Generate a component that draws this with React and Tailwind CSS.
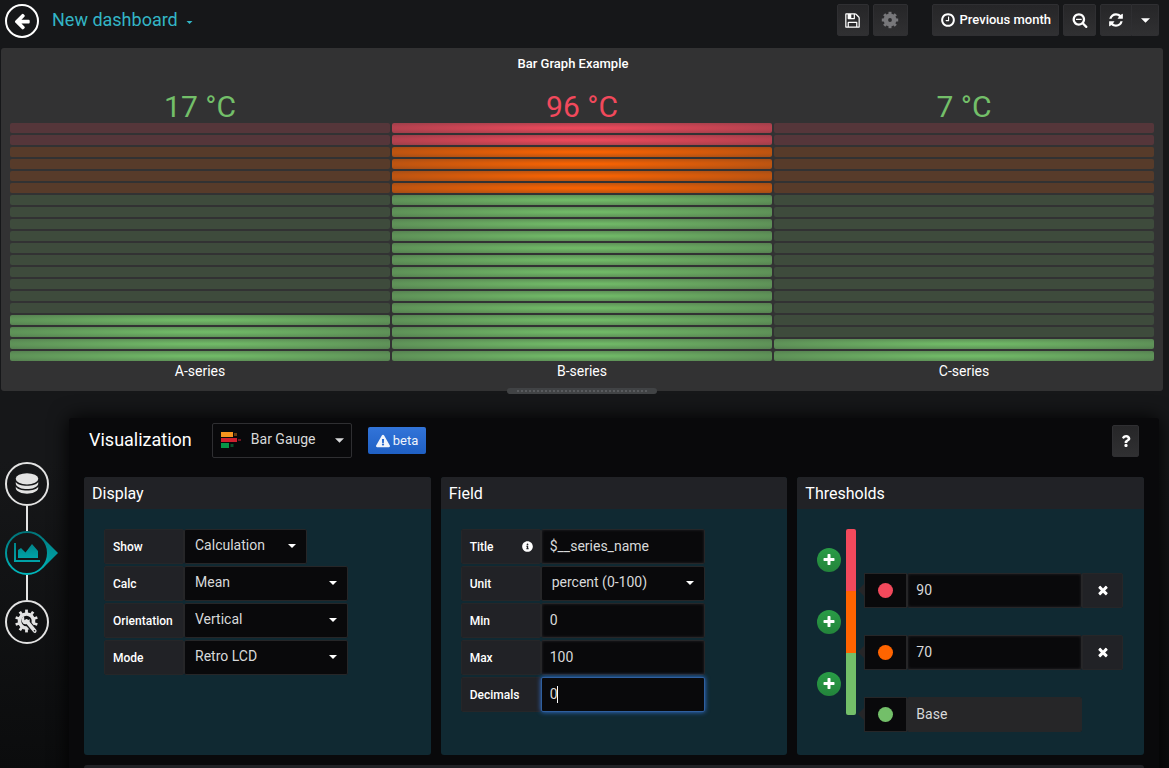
import React, { useState } from "react";
import { FaExclamationTriangle, FaInfoCircle, FaQuestion } from "react-icons/fa";
import clsx from "clsx";

const ICONS = {
  back: "M1664 896v128q0 53-32.5 90.5t-84.5 37.5h-704l293 294q38 36 38 90t-38 90l-75 76q-37 37-90 37-52 0-91-37l-651-652q-37-37-37-90 0-52 37-91l651-650q38-38 91-38 52 0 90 38l75 74q38 38 38 91t-38 91l-293 293h704q52 0 84.5 37.5t32.5 90.5z",
  save: "M512 1536h768v-384h-768v384zm896 0h128v-896q0-14-10-38.5t-20-34.5l-281-281q-10-10-34-20t-39-10v416q0 40-28 68t-68 28h-576q-40 0-68-28t-28-68v-416h-128v1280h128v-416q0-40 28-68t68-28h832q40 0 68 28t28 68v416zm-384-928v-320q0-13-9.5-22.5t-22.5-9.5h-192q-13 0-22.5 9.5t-9.5 22.5v320q0 13 9.5 22.5t22.5 9.5h192q13 0 22.5-9.5t9.5-22.5zm640 32v928q0 40-28 68t-68 28h-1344q-40 0-68-28t-28-68v-1344q0-40 28-68t68-28h928q40 0 88 20t76 48l280 280q28 28 48 76t20 88z",
  clock: "M1024 544v448q0 14-9 23t-23 9h-320q-14 0-23-9t-9-23v-64q0-14 9-23t23-9h224v-352q0-14 9-23t23-9h64q14 0 23 9t9 23zm416 352q0-148-73-273t-198-198-273-73-273 73-198 198-73 273 73 273 198 198 273 73 273-73 198-198 73-273zm224 0q0 209-103 385.5t-279.5 279.5-385.5 103-385.5-103-279.5-279.5-103-385.5 103-385.5 279.5-279.5 385.5-103 385.5 103 279.5 279.5 103 385.5z",
  zoomOut: "M1088 800v64q0 13-9.5 22.5t-22.5 9.5h-576q-13 0-22.5-9.5t-9.5-22.5v-64q0-13 9.5-22.5t22.5-9.5h576q13 0 22.5 9.5t9.5 22.5zm128 32q0-185-131.5-316.5t-316.5-131.5-316.5 131.5-131.5 316.5 131.5 316.5 316.5 131.5 316.5-131.5 131.5-316.5zm512 832q0 53-37.5 90.5t-90.5 37.5q-54 0-90-38l-343-342q-179 124-399 124-143 0-273.5-55.5t-225-150-150-225-55.5-273.5 55.5-273.5 150-225 225-150 273.5-55.5 273.5 55.5 225 150 150 225 55.5 273.5q0 220-124 399l343 343q37 37 37 90z",
  refresh: "M1639 1056q0 5-1 7-64 268-268 434.5t-478 166.5q-146 0-282.5-55t-243.5-157l-129 129q-19 19-45 19t-45-19-19-45v-448q0-26 19-45t45-19h448q26 0 45 19t19 45-19 45l-137 137q71 66 161 102t187 36q134 0 250-65t186-179q11-17 53-117 8-23 30-23h192q13 0 22.5 9.5t9.5 22.5zm25-800v448q0 26-19 45t-45 19h-448q-26 0-45-19t-19-45 19-45l138-138q-148-137-349-137-134 0-250 65t-186 179q-11 17-53 117-8 23-30 23h-199q-13 0-22.5-9.5t-9.5-22.5v-7q65-268 270-434.5t480-166.5q146 0 284 55.5t245 156.5l130-129q19-19 45-19t45 19 19 45z",
  plus: "M1600 736v192q0 40-28 68t-68 28h-416v416q0 40-28 68t-68 28h-192q-40 0-68-28t-28-68v-416h-416q-40 0-68-28t-28-68v-192q0-40 28-68t68-28h416v-416q0-40 28-68t68-28h192q40 0 68 28t28 68v416h416q40 0 68 28t28 68z",
  times: "M1490 1322q0 40-28 68l-136 136q-28 28-68 28t-68-28l-294-294-294 294q-28 28-68 28t-68-28l-136-136q-28-28-28-68t28-68l294-294-294-294q-28-28-28-68t28-68l136-136q28-28 68-28t68 28l294 294 294-294q28-28 68-28t68 28l136 136q28 28 28 68t-28 68l-294 294 294 294q28 28 28 68z",
};

const Icon = ({ name, className }) => (
  <svg viewBox="0 0 1792 1792" fill="currentColor" className={className} aria-hidden="true">
    <path d={ICONS[name]} />
  </svg>
);

const Caret = ({ className }) => (
  <svg viewBox="0 0 8 4" fill="currentColor" className={clsx("h-1 w-2", className)} aria-hidden="true">
    <path d="M0 0h8L4 4z" />
  </svg>
);

const CogIcon = () => (
  <svg viewBox="0 0 18 18" className="size-[18px]" fill="none" stroke="currentColor" aria-hidden="true">
    <circle cx="9" cy="9" r="4.2" strokeWidth="4.6" />
    {[0, 45, 90, 135, 180, 225, 270, 315].map((a) => (
      <path key={a} d="M9 4V.8" strokeWidth="3" transform={`rotate(${a} 9 9)`} />
    ))}
  </svg>
);

const DatabaseIcon = () => (
  <svg viewBox="0 0 24 22" className="h-[22px] w-6" fill="currentColor" aria-hidden="true">
    <ellipse cx="12" cy="5.800" rx="11.300" ry="5.600" />
    <path d="M.8 8.800c1.800 5.400 20.600 5.400 22.400 0v2.200c-1.800 6.800-20.600 6.800-22.400 0z" />
    <path d="M.8 13.400c1.800 5.400 20.600 5.400 22.400 0v2.200c-1.800 6.800-20.600 6.800-22.400 0z" />
  </svg>
);

const ChartIcon = () => (
  <svg viewBox="0 0 26 20" className="h-5 w-[26px]" aria-hidden="true">
    <defs>
      <linearGradient id="tealFill" x1="0" y1="0" x2="0" y2="1">
        <stop offset="0" stopColor="#00858a" />
        <stop offset="1" stopColor="#00a3a8" />
      </linearGradient>
    </defs>
    <path d="M0 0h2v17h24v2H0z" fill="url(#tealFill)" />
    <path d="M4 15V7l3-2 4.500 4.500L18 1l6 7v7z" fill="url(#tealFill)" />
  </svg>
);

const GearWrenchIcon = () => (
  <svg viewBox="0 0 26 26" className="size-[26px]" fill="none" stroke="currentColor" aria-hidden="true">
    <circle cx="12.500" cy="12" r="7" strokeWidth="3.600" />
    {[0, 36, 72, 108, 144, 180, 216, 252, 288, 324].map((a) => (
      <path key={a} d="M12.500 4V.6" strokeWidth="2.800" transform={`rotate(${a} 12.500 12)`} />
    ))}
    <path d="M13 13l8.500 10" stroke="#141517" strokeWidth="6" strokeLinecap="round" />
    <path d="M12.500 12l8.300 10" strokeWidth="3.600" strokeLinecap="round" />
    <path d="M10 7.500a4 4 0 1 0 5.500 2.500l-2.500 2.200-2.600-1.200z" fill="currentColor" stroke="none" />
    <circle cx="20.500" cy="21.800" r=".8" fill="#141517" stroke="none" />
  </svg>
);

const BarGaugeIcon = () => (
  <svg viewBox="0 0 20 16" className="h-4 w-5" aria-hidden="true">
    <path d="M0 0h12v5H0z" fill="#f7941e" />
    <path d="M13 1h3v3h-3z" fill="#6b3f10" />
    <path d="M0 6h16v4H0z" fill="#d0202e" />
    <path d="M17 7h3v2h-3z" fill="#6b1420" />
    <path d="M0 11h8v5H0z" fill="#069547" />
    <path d="M9.500 12h3v3h-3z" fill="#0b4f2a" />
  </svg>
);

const LIT = {
  red: "bg-[radial-gradient(rgba(242,73,92,0.95)_10%,rgba(242,73,92,0.55))]",
  orange: "bg-[radial-gradient(rgba(255,100,0,0.95)_10%,rgba(255,100,0,0.55))]",
  green: "bg-[radial-gradient(rgba(115,191,105,0.95)_10%,rgba(115,191,105,0.55))]",
};

const DIM = {
  red: "bg-[#f2495c]/18",
  orange: "bg-[#ff6400]/18",
  green: "bg-[#73bf69]/18",
};

const SOLID = { red: "bg-[#f2495c]", orange: "bg-[#ff6400]", green: "bg-[#73bf69]" };

const CELLS = 20;

const cellColor = (percent) => {
  if (percent >= 90) return "red";
  if (percent >= 70) return "orange";
  return "green";
};

const series = [
  { name: "A-series", value: 17 },
  { name: "B-series", value: 96 },
  { name: "C-series", value: 7 },
];

const RetroGauge = ({ name, value }) => {
  const cells = [];
  for (let i = CELLS - 1; i >= 0; i--) {
    const percent = (i * 100) / CELLS;
    const color = cellColor(percent);
    cells.push(
      <div
        key={i}
        className={clsx("h-[10px] rounded-xs", percent < value ? LIT[color] : DIM[color])}
      />
    );
  }
  return (
    <div className="flex flex-1 flex-col text-center">
      <div
        className={clsx(
          "h-[34px] text-3xl leading-9",
          value >= 90 ? "text-[#f2495c]" : "text-[#73bf69]"
        )}
      >
        {value} °C
      </div>
      <div className="flex flex-col gap-[2px]">{cells}</div>
      <div className="text-sm leading-5 text-white">{name}</div>
    </div>
  );
};

const navButton =
  "flex h-8 items-center justify-center border border-[#2f2f32] bg-linear-to-b from-[#262628] to-[#303032] text-white";

const TopBar = () => (
  <header className="flex h-12 shrink-0 items-start pt-1 pr-[10px] pl-[5px]">
    <button
      aria-label="Go back"
      className="flex size-[34px] items-center justify-center rounded-full border-2 border-white text-white"
    >
      <Icon name="back" className="size-[18px]" />
    </button>
    <a href="#dashboard" className="ml-[13px] flex h-8 items-center text-lg text-[#33b5c5]">
      New dashboard
      <Caret className="mt-1 ml-2 h-[3px] w-[7px]" />
    </a>
    <div className="ml-auto flex gap-1">
      <button aria-label="Save dashboard" className={clsx(navButton, "w-8 rounded-xs")}>
        <Icon name="save" className="size-[17px]" />
      </button>
      <button aria-label="Dashboard settings" className={clsx(navButton, "w-[35px] rounded-xs")}>
        <span className="text-[#77777a]">
          <CogIcon />
        </span>
      </button>
      <button
        className={clsx(navButton, "ml-5 gap-1 rounded-xs px-[7px] text-[13px] font-medium")}
      >
        <Icon name="clock" className="size-4" />
        Previous month
      </button>
      <button aria-label="Zoom out" className={clsx(navButton, "w-[33px] rounded-xs")}>
        <Icon name="zoomOut" className="size-4" />
      </button>
      <div className="flex">
        <button aria-label="Refresh" className={clsx(navButton, "w-8 rounded-l-xs")}>
          <Icon name="refresh" className="size-4" />
        </button>
        <button aria-label="Refresh interval" className={clsx(navButton, "w-[27px] rounded-r-xs border-l-0")}>
          <Caret className="h-[5px] w-[9px]" />
        </button>
      </div>
    </div>
  </header>
);

const GraphPanel = () => (
  <section className="relative mr-[6px] ml-px rounded-[3px] bg-[#323233] px-[9px] pb-[10px]">
    <h2 className="mb-[9px] pr-[18px] text-center text-[13px] leading-8 font-medium text-white">
      Bar Graph Example
    </h2>
    <div className="flex gap-[2px]">
      {series.map((s) => (
        <RetroGauge key={s.name} name={s.name} value={s.value} />
      ))}
    </div>
    <div className="absolute -bottom-[3px] left-1/2 flex h-[6px] w-[150px] -translate-x-1/2 items-center justify-center rounded-full bg-[#414345]">
      <div className="h-[2px] w-[130px] bg-[repeating-linear-gradient(90deg,#595b5e_0_2px,transparent_2px_4px)]" />
    </div>
  </section>
);

const railButton = "flex size-11 items-center justify-center rounded-full border-2";

const Rail = () => (
  <nav className="flex w-[69px] shrink-0 flex-col items-start pt-11 pl-[5px] text-[#e3e3e3]">
    <button aria-label="Queries" className={clsx(railButton, "border-[#e3e3e3]")}>
      <DatabaseIcon />
    </button>
    <div className="ml-[21px] h-[25px] w-[2px] bg-[#e3e3e3]" />
    <button aria-label="Visualization" className="relative flex size-11 items-center justify-center">
      <svg viewBox="0 0 54 44" className="absolute top-0 left-0 h-11 w-[54px]" aria-hidden="true">
        <defs>
          <linearGradient id="ring" x1="0" y1="0" x2="0" y2="1">
            <stop offset="0" stopColor="#007479" />
            <stop offset="1" stopColor="#00b8bd" />
          </linearGradient>
        </defs>
        <path d="M38 7l15 15-15 15z" fill="url(#tealFill)" />
        <circle cx="22" cy="22" r="21" fill="#141517" stroke="url(#ring)" strokeWidth="2" />
      </svg>
      <span className="relative">
        <ChartIcon />
      </span>
    </button>
    <div className="ml-[21px] h-[25px] w-[2px] bg-[#e3e3e3]" />
    <button aria-label="General" className={clsx(railButton, "border-[#e3e3e3]")}>
      <GearWrenchIcon />
    </button>
  </nav>
);

const OptionsGroup = ({ title, children }) => (
  <section className="flex flex-col overflow-hidden rounded-[3px] bg-[#102932]">
    <h3 className="h-8 bg-[#212226] px-2 text-base leading-[34px] text-white">{title}</h3>
    <div className="flex-1 px-5 pt-5 pb-[10px]">{children}</div>
  </section>
);

const Row = ({ label, id, info, children }) => (
  <div className="mb-[2px] flex h-[35px]">
    <label
      htmlFor={id}
      className="flex w-20 items-center justify-between rounded-xs border border-[#262628] bg-[#212226] pr-[7px] pl-2 text-xs font-medium text-white"
    >
      {label}
      {info && <FaInfoCircle className="size-[11px]" />}
    </label>
    {children}
  </div>
);

const SelectBox = ({ id, value, options = [], className }) => {
  const [current, setCurrent] = useState(value);
  return (
    <div className={clsx("relative", className)}>
      <select
        id={id}
        value={current}
        onChange={(e) => setCurrent(e.target.value)}
        className="h-[35px] w-full appearance-none rounded-xs border border-[#262628] bg-[#09090b] pr-6 pb-[3px] pl-[10px] text-sm text-[#d8d9da]"
      >
        {[value, ...options].map((o) => (
          <option key={o}>{o}</option>
        ))}
      </select>
      <Caret className="pointer-events-none absolute top-[15px] right-[11px] text-white" />
    </div>
  );
};

const TextBox = ({ id, value, focused }) => (
  <div className="relative w-[164px]">
    <input
      id={id}
      defaultValue={value}
      className={clsx(
        "h-[35px] w-full rounded-xs border bg-[#09090b] px-2 pb-[2px] text-sm text-[#d8d9da] outline-none",
        focused
          ? "border-[#2f5f9e] shadow-[0_0_5px_#3274d9]"
          : "border-[#262628] shadow-[inset_0_0_3px_#262628]"
      )}
    />
    {focused && <span className="absolute top-[9px] left-4 h-[17px] w-px bg-white" />}
  </div>
);

const Display = () => (
  <OptionsGroup title="Display">
    <Row label="Show" id="show">
      <SelectBox id="show" value="Calculation" options={["All values"]} className="w-[123px]" />
    </Row>
    <Row label="Calc" id="calc">
      <SelectBox id="calc" value="Mean" options={["Last", "Max"]} className="w-[164px]" />
    </Row>
    <Row label="Orientation" id="orientation">
      <SelectBox id="orientation" value="Vertical" options={["Horizontal"]} className="w-[164px]" />
    </Row>
    <Row label="Mode" id="mode">
      <SelectBox id="mode" value="Retro LCD" options={["Gradient", "Basic"]} className="w-[164px]" />
    </Row>
  </OptionsGroup>
);

const Field = () => (
  <OptionsGroup title="Field">
    <Row label="Title" id="title" info>
      <TextBox id="title" value="$__series_name" />
    </Row>
    <Row label="Unit" id="unit">
      <SelectBox id="unit" value="percent (0-100)" options={["Celsius (°C)"]} className="w-[164px]" />
    </Row>
    <Row label="Min" id="min">
      <TextBox id="min" value="0" />
    </Row>
    <Row label="Max" id="max">
      <TextBox id="max" value="100" />
    </Row>
    <Row label="Decimals" id="decimals">
      <TextBox id="decimals" value="0" focused />
    </Row>
  </OptionsGroup>
);

const thresholds = [
  { color: "red", value: "90" },
  { color: "orange", value: "70" },
  { color: "green", value: "Base", base: true },
];

const Thresholds = () => (
  <OptionsGroup title="Thresholds">
    <div className="flex">
      <div className="w-6 shrink-0">
        {thresholds.map((t) => (
          <div key={t.color} className="flex h-[62px] items-center">
            <button
              aria-label="Add threshold"
              className="flex size-6 items-center justify-center rounded-full bg-linear-to-b from-[#299c46] to-[#23843b] text-white"
            >
              <Icon name="plus" className="size-[14px]" />
            </button>
          </div>
        ))}
      </div>
      <div className="ml-[5px] h-[186px] w-[10px] shrink-0 overflow-hidden rounded-xs">
        {thresholds.map((t) => (
          <div key={t.color} className={clsx("h-[62px]", SOLID[t.color])} />
        ))}
      </div>
      <div className="ml-[2px] min-w-0 flex-1 pt-[30px]">
        {thresholds.map((t) => (
          <div key={t.color} className="flex h-[62px] items-center">
            <div className="border-y-6 border-r-6 border-y-transparent border-r-[#262628]" />
            <button
              aria-label={`${t.color} threshold color`}
              className="flex h-[35px] w-[43px] shrink-0 items-center justify-center border border-[#262628] bg-[#09090b]"
            >
              <span className={clsx("size-[15px] rounded-full", SOLID[t.color])} />
            </button>
            <input
              aria-label={`${t.color} threshold value`}
              defaultValue={t.value}
              readOnly={t.base}
              className={clsx(
                "h-[35px] w-[175px] min-w-0 rounded-xs border border-[#262628] px-2 text-sm text-[#d8d9da] outline-none",
                t.base ? "bg-[#262628]" : "bg-[#09090b] shadow-[inset_0_0_3px_#262628]"
              )}
            />
            {!t.base && (
              <button
                aria-label="Remove threshold"
                className="flex h-[35px] w-[41px] shrink-0 items-center justify-center rounded-r-xs border border-[#262628] bg-[#212226] text-white"
              >
                <Icon name="times" className="size-[14px]" />
              </button>
            )}
          </div>
        ))}
      </div>
    </div>
  </OptionsGroup>
);

const Editor = () => (
  <main className="mr-[10px] flex-1 rounded-[3px] bg-[#09090b] px-[15px] pt-[5px] shadow-[0_0_20px_black]">
    <div className="mb-[19px] flex h-[35px] items-center px-[5px]">
      <h1 className="pb-[2px] text-lg text-white">Visualization</h1>
      <div className="relative ml-5 w-[140px]">
        <span className="pointer-events-none absolute top-[9px] left-[9px]">
          <BarGaugeIcon />
        </span>
        <select
          aria-label="Visualization type"
          className="h-[35px] w-full appearance-none rounded-xs border border-[#2f2f32] bg-transparent pb-[3px] pl-[38px] text-sm text-[#d8d9da]"
        >
          <option>Bar Gauge</option>
          <option>Gauge</option>
        </select>
        <Caret className="pointer-events-none absolute top-[15px] right-2 h-[5px] w-[9px] text-[#d8d9da]" />
      </div>
      <div className="ml-4 flex h-[27px] items-center gap-[3px] rounded-xs bg-linear-to-b from-[#3274d9] to-[#1f60c4] px-2 text-[13px] text-[#f0f4fb]">
        <FaExclamationTriangle className="size-[14px]" />
        beta
      </div>
      <button aria-label="Help" className={clsx(navButton, "ml-auto w-[27px] rounded-xs")}>
        <FaQuestion className="size-3" />
      </button>
    </div>
    <div className="grid grid-cols-3 gap-[10px]">
      <Display />
      <Field />
      <Thresholds />
    </div>
    <div className="mt-[10px] h-8 rounded-[3px] bg-[#212226]" />
  </main>
);

const App = () => {
  return (
    <div className="flex h-screen flex-col overflow-hidden bg-linear-to-b from-[#161719] from-60% to-[#0b0c0d] font-[Roboto,sans-serif]">
      <TopBar />
      <GraphPanel />
      <div className="mt-[27px] flex flex-1">
        <Rail />
        <Editor />
      </div>
    </div>
  );
};

export default App;
